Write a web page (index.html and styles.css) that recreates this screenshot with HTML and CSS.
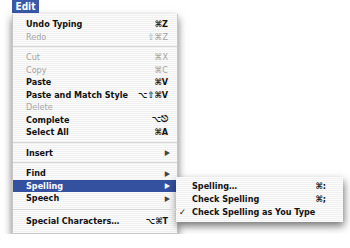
FILE: index.html
```html
<!DOCTYPE html>
<html lang="en">
<head>
    <meta charset="UTF-8">
    <title>Edit menu</title>
    <link rel="stylesheet" href="styles.css">
</head>
<body>
    <div class="menu-title">Edit</div>

    <ul class="menu">
        <li class="item"><span class="label">Undo Typing</span><span class="key">⌘Z</span></li>
        <li class="item disabled"><span class="label">Redo</span><span class="key">⇧⌘Z</span></li>
        <li class="sep"></li>
        <li class="item disabled"><span class="label">Cut</span><span class="key">⌘X</span></li>
        <li class="item disabled"><span class="label">Copy</span><span class="key">⌘C</span></li>
        <li class="item"><span class="label">Paste</span><span class="key">⌘V</span></li>
        <li class="item"><span class="label">Paste and Match Style</span><span class="key">⌥⇧⌘V</span></li>
        <li class="item disabled"><span class="label">Delete</span></li>
        <li class="item"><span class="label">Complete</span><span class="key">⌥⎋</span></li>
        <li class="item"><span class="label">Select All</span><span class="key">⌘A</span></li>
        <li class="sep"></li>
        <li class="item"><span class="label">Insert</span><span class="arrow">▶</span></li>
        <li class="sep"></li>
        <li class="item"><span class="label">Find</span><span class="arrow">▶</span></li>
        <li class="item selected">
            <span class="label">Spelling</span><span class="arrow">▶</span>
            <ul class="menu submenu">
                <li class="item"><span class="label">Spelling…</span><span class="key">⌘:</span></li>
                <li class="item"><span class="label">Check Spelling</span><span class="key">⌘;</span></li>
                <li class="item checked"><span class="label">Check Spelling as You Type</span></li>
            </ul>
        </li>
        <li class="item"><span class="label">Speech</span><span class="arrow">▶</span></li>
        <li class="sep wide"></li>
        <li class="item"><span class="label">Special Characters…</span><span class="key">⌥⌘T</span></li>
    </ul>
</body>
</html>
```

FILE: styles.css
```css
body {
    margin: 0;
    background-color: white;
    font-family: 'DejaVu Sans Condensed', 'Liberation Sans', sans-serif;
    font-size: 9px;
    font-weight: bold;
    color: #111;
}

.menu-title {
    margin-left: 12px;
    width: 27px;
    height: 13px;
    line-height: 13px;
    background-color: #3a5aa8;
    color: white;
    font-size: 10px;
    text-align: center;
}

.menu {
    list-style: none;
    margin: 1px 0 0 12px;
    padding: 4px 0 6px 0;
    width: 166px;
    background: repeating-linear-gradient(#fbfbfb 0 1px, #f1f1f1 1px 2px);
    border: 1px solid #c8c8c8;
    border-top: none;
    box-shadow: 0 4px 8px rgba(0, 0, 0, 0.55);
    box-sizing: border-box;
}

.item {
    position: relative;
    display: flex;
    align-items: center;
    height: 12.5px;
    padding: 0 9px 0 13px;
}

.label {
    flex: 1;
    white-space: nowrap;
}

.key {
    white-space: nowrap;
}

.arrow {
    font-size: 7.5px;
    color: #444;
    margin-right: -2px;
}

.disabled {
    color: #a4a4a4;
    font-weight: normal;
}

.selected {
    background-color: #33519f;
    color: white;
}

.selected > .arrow {
    color: white;
}

.sep {
    height: 8px;
    position: relative;
}

.sep::after {
    content: '';
    position: absolute;
    left: 0;
    right: 0;
    top: 3px;
    border-top: 1px solid #d6d6d6;
}

.sep.wide {
    height: 10px;
}

.sep.wide::after {
    top: 4px;
}

.submenu {
    position: absolute;
    left: 100%;
    top: -3px;
    margin: 0 0 0 -1px;
    width: 167px;
    padding: 3px 0 3px 0;
    border: none;
    color: #111;
    font-weight: bold;
    box-shadow: 1px 4px 8px rgba(0, 0, 0, 0.55);
}

.submenu .item {
    height: 13px;
    padding: 0 17px 0 16px;
}

.checked::before {
    content: '✓';
    position: absolute;
    left: 3px;
    font-weight: normal;
}
```
